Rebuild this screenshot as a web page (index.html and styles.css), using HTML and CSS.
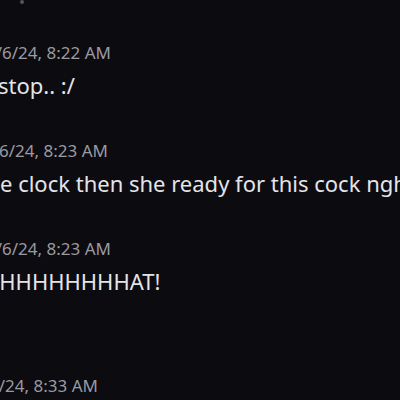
FILE: index.html
```html
<!DOCTYPE html>
<html lang="en">
<head>
    <meta charset="UTF-8">
    <title>Chat</title>
    <link rel="stylesheet" href="styles.css">
</head>
<body>
    <div class="chat">
        <div class="top-mark"></div>
        <div class="msg">
            <div class="time">1/6/24, 8:22 AM</div>
            <div class="text t1">stop.. :/</div>
        </div>
        <div class="msg">
            <div class="time ts2">1/6/24, 8:23 AM</div>
            <div class="text t2">e clock then she ready for this cock ngh</div>
        </div>
        <div class="msg">
            <div class="time">1/6/24, 8:23 AM</div>
            <div class="text t3">HHHHHHHHHAT!</div>
        </div>
        <div class="msg last">
            <div class="time ts4">1/6/24, 8:33 AM</div>
        </div>
    </div>
</body>
</html>
```
FILE: styles.css
```css
html, body {
    margin: 0;
    height: 100%;
    background: #0c0b10;
    overflow: hidden;
}
.chat {
    font-family: 'Noto Sans', sans-serif;
    margin-left: -14px;
    white-space: nowrap;
}
.top-mark {
    width: 4px;
    height: 4px;
    margin-left: 34px;
    background: #55555c;
    border-radius: 2px;
    margin-bottom: 37px;
}
.msg {
    height: 98px;
}
.msg.last {
    margin-top: 39px;
}
.time {
    color: #9a9aa1;
    font-size: 17px;
    line-height: 24px;
}
.text {
    color: #e4e4e8;
    font-size: 22px;
    line-height: 30px;
    margin-top: 5px;
}
.ts2 { margin-left: -3px; }
.ts4 { margin-left: -13px; }
.t1 { margin-left: 12px; }
.t2 { margin-left: 14px; }
.t3 { margin-left: -3px; }
```
